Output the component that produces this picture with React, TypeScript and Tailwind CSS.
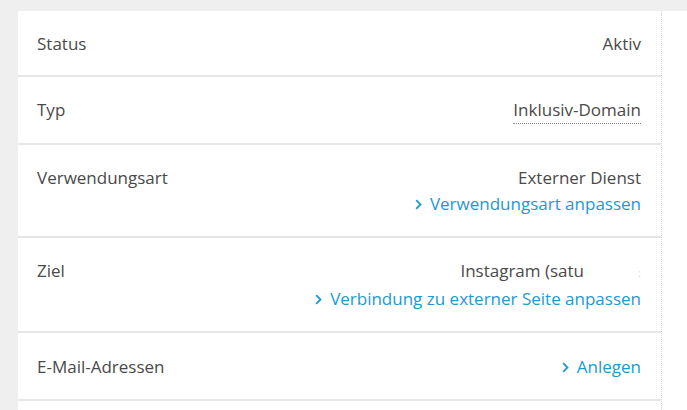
import React from "react";

const font = { fontFamily: '"Open Sans", "Noto Sans", sans-serif' };

function Chevron() {
  return (
    <svg width="7" height="11" viewBox="0 0 7 11" className="mr-[8px] inline-block" aria-hidden>
      <path d="M1.2 1.2 L5.5 5.5 L1.2 9.8" fill="none" stroke="#1a9ad6" strokeWidth="1.8" />
    </svg>
  );
}

function LinkLine({ text }: { text: string }) {
  return (
    <div className="flex h-[26px] items-center justify-end text-[#1a9ad6]">
      <Chevron />
      <span>{text}</span>
    </div>
  );
}

function Row({ label, center, children }: { label: string; center?: boolean; children: React.ReactNode }) {
  return (
    <div
      className={
        center
          ? "flex items-center justify-between border-b-2 border-[#e6e6e6] pb-[19px] pl-[19px] pr-[20px] pt-[21px]"
          : "flex items-start justify-between border-b-2 border-[#e6e6e6] pb-[19px] pl-[19px] pr-[20px] pt-[21px]"
      }
    >
      <div className="text-[#4a4a4a]">{label}</div>
      <div className="flex flex-col items-end text-right">{children}</div>
    </div>
  );
}

export default function App() {
  return (
    <div className="flex h-[410px] w-full flex-col overflow-hidden bg-white text-[17px] leading-[24px]" style={font}>
      <div className="h-[11px] shrink-0 bg-[#efefef]" />
      <div className="flex flex-1">
        <div className="w-[18px] shrink-0 bg-[#efefef]" />
        <div className="w-[644px] shrink-0 border-r border-dotted border-[#d6d6d6] bg-white">
          <Row label="Status">
            <span className="text-[#4a4a4a]">Aktiv</span>
          </Row>
          <Row label="Typ">
            <span className="border-b border-dotted border-[#8a8a8a] pb-px leading-[24px] text-[#4a4a4a]">Inklusiv-Domain</span>
          </Row>
          <Row label="Verwendungsart">
            <span className="text-[#4a4a4a]">Externer Dienst</span>
            <div className="mt-px">
              <LinkLine text="Verwendungsart anpassen" />
            </div>
          </Row>
          <Row label="Ziel">
            <span className="text-[#4a4a4a]">
              Instagram (satu
              <span className="inline-block w-[57px] text-right text-[10px] text-[#d8d8d8]">:</span>
            </span>
            <div className="mt-px">
              <LinkLine text="Verbindung zu externer Seite anpassen" />
            </div>
          </Row>
          <Row label="E-Mail-Adressen" center>
            <LinkLine text="Anlegen" />
          </Row>
        </div>
        <div className="flex-1 bg-white" />
      </div>
    </div>
  );
}
